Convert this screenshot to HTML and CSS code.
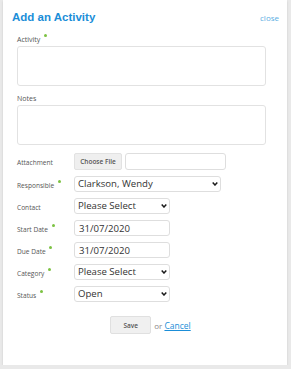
FILE: index.html
```html
<!DOCTYPE html>
<html lang="en">
<head>
  <meta charset="UTF-8" />
  <title>Add an Activity</title>
  <link rel="stylesheet" href="styles.css">
</head>
<body>

<div class="dialog">
  <div class="dialog-head">
    <h1>Add an Activity</h1>
    <a class="close" href="#">close</a>
  </div>

  <form class="activity-form">
    <label class="block-label">Activity <span class="req"></span></label>
    <textarea class="area"></textarea>

    <label class="block-label notes">Notes</label>
    <textarea class="area"></textarea>

    <div class="rows">
      <div class="row first">
        <label>Attachment</label>
        <div class="file">
          <span class="file-btn">Choose File</span>
          <input class="file-name" type="text">
        </div>
      </div>
      <div class="row">
        <label>Responsible <span class="req"></span></label>
        <span class="select wide">
          <select><option>Clarkson, Wendy</option></select>
          <svg class="caret" viewBox="0 0 6 4"><path d="M0.7 0.6 L3 3 L5.3 0.6" /></svg>
        </span>
      </div>
      <div class="row">
        <label>Contact</label>
        <span class="select">
          <select><option>Please Select</option></select>
          <svg class="caret" viewBox="0 0 6 4"><path d="M0.7 0.6 L3 3 L5.3 0.6" /></svg>
        </span>
      </div>
      <div class="row">
        <label>Start Date <span class="req"></span></label>
        <input type="text" value="31/07/2020">
      </div>
      <div class="row">
        <label>Due Date <span class="req"></span></label>
        <input type="text" value="31/07/2020">
      </div>
      <div class="row">
        <label>Category <span class="req"></span></label>
        <span class="select">
          <select><option>Please Select</option></select>
          <svg class="caret" viewBox="0 0 6 4"><path d="M0.7 0.6 L3 3 L5.3 0.6" /></svg>
        </span>
      </div>
      <div class="row">
        <label>Status <span class="req"></span></label>
        <span class="select">
          <select><option>Open</option></select>
          <svg class="caret" viewBox="0 0 6 4"><path d="M0.7 0.6 L3 3 L5.3 0.6" /></svg>
        </span>
      </div>
    </div>

    <div class="actions">
      <button type="button" class="save">Save</button>
      <span class="or">or <a href="#">Cancel</a></span>
    </div>
  </form>
</div>

</body>
</html>
```

FILE: styles.css
```css
body {
  margin: 0;
  background-color: #e9e9e9;
  font-family: "Open Sans", Arial, sans-serif;
  color: #555;
}

.dialog {
  width: 284px;
  height: 365px;
  margin: 0 0 0 3px;
  padding: 0 21px 0 14px;
  box-sizing: border-box;
  background-color: #fff;
  box-shadow: 0 1px 2px rgba(0, 0, 0, 0.12);
}

.dialog-head {
  display: flex;
  justify-content: space-between;
  align-items: center;
  height: 34px;
  margin: 0 -13px 0 -5px;
}

h1 {
  margin: 0;
  font-family: "Liberation Sans", Arial, sans-serif;
  font-size: 11.5px;
  font-weight: 700;
  color: #1b8ed8;
}

.close {
  font-size: 8px;
  color: #5aaee3;
  text-decoration: none;
}

.block-label {
  display: block;
  font-size: 7px;
  line-height: 12px;
}

.notes {
  margin-top: 7px;
}

.req {
  display: inline-block;
  width: 3px;
  height: 3px;
  border-radius: 50%;
  background-color: #7cc242;
  vertical-align: 5px;
  margin-left: 2px;
}

.area {
  display: block;
  width: 100%;
  height: 40px;
  box-sizing: border-box;
  border: 1px solid #e2e2e2;
  border-radius: 3px;
  resize: none;
  margin: 0;
}

.rows {
  display: flex;
  flex-direction: column;
  gap: 6px;
  margin-top: 8px;
}

.row {
  display: grid;
  grid-template-columns: 57px auto;
  align-items: center;
  height: 16px;
}

.row.first {
  height: 17px;
}

.row label {
  font-size: 6.6px;
  line-height: 9px;
  padding-top: 2px;
}

.row input,
.row select {
  display: block;
  box-sizing: border-box;
  width: 96px;
  height: 16px;
  margin: 0;
  padding: 0 4px;
  border: 1px solid #dedede;
  border-radius: 3px;
  background-color: #fff;
  font-family: "Open Sans", Arial, sans-serif;
  font-size: 9.6px;
  line-height: 14px;
  color: #333;
  outline: none;
}

.row select {
  appearance: none;
  -webkit-appearance: none;
  padding: 0 0 0 3px;
}

.select {
  position: relative;
  display: block;
  width: 96px;
  height: 16px;
}

.select.wide,
.select.wide select {
  width: 147px;
}

.caret {
  position: absolute;
  right: 3px;
  top: 6px;
  width: 6px;
  height: 4px;
  pointer-events: none;
}

.caret path {
  fill: none;
  stroke: #1a1a1a;
  stroke-width: 1.5;
}

.file {
  display: flex;
  gap: 3px;
}

.file-btn {
  box-sizing: border-box;
  width: 48px;
  height: 17px;
  line-height: 15px;
  text-align: center;
  background-color: #efefef;
  border: 1px solid #e2e2e2;
  border-radius: 2px;
  font-size: 6.5px;
  font-weight: 600;
  color: #555;
}

.row .file-name {
  width: 101px;
  height: 17px;
}

.actions {
  display: flex;
  align-items: center;
  justify-content: center;
  gap: 3px;
  margin-top: 14px;
  padding-left: 18px;
}

.save {
  width: 41px;
  height: 18px;
  padding: 0;
  background-color: #f0f0f0;
  border: 1px solid #e0e0e0;
  border-radius: 2px;
  font-family: "Open Sans", Arial, sans-serif;
  font-size: 6.5px;
  font-weight: 600;
  color: #555;
}

.or {
  font-size: 8px;
  color: #888;
}

.or a {
  font-size: 8.5px;
  color: #1b8ed8;
}
```
